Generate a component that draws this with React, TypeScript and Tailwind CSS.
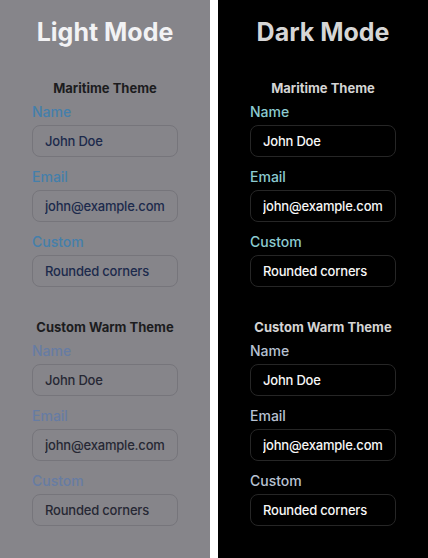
import React from "react";

type Palette = {
  panel: string;
  title: string;
  heading: string;
  border: string;
};

type Theme = {
  name: string;
  label: string;
  text: string;
};

interface Field {
  label: string;
  value: string;
}

const fields: Field[] = [
  { label: "Name", value: "John Doe" },
  { label: "Email", value: "john@example.com" },
  { label: "Custom", value: "Rounded corners" },
];

const light: Palette = {
  panel: "bg-[#86858a]",
  title: "text-[#f2f2f4]",
  heading: "text-[#1c1c1e]",
  border: "border-[#76757b]",
};

const dark: Palette = {
  panel: "bg-black",
  title: "text-[#d6d6d6]",
  heading: "text-[#d4d4d4]",
  border: "border-[#262626]",
};

const lightThemes: Theme[] = [
  { name: "Maritime Theme", label: "text-[#447fab]", text: "text-[#1c2a4c]" },
  { name: "Custom Warm Theme", label: "text-[#667ca3]", text: "text-[#262834]" },
];

const darkThemes: Theme[] = [
  { name: "Maritime Theme", label: "text-[#8ccbd0]", text: "text-[#f7f7f7]" },
  { name: "Custom Warm Theme", label: "text-[#b8c2d2]", text: "text-[#f7f7f7]" },
];

// One themed group of labelled inputs
const ThemeSection: React.FC<{ theme: Theme; palette: Palette; first: boolean }> = ({
  theme,
  palette,
  first,
}) => (
  <section className={first ? "mt-[30px]" : "mt-[30px]"}>
    <h3 className={`h-5 text-center text-[13px] leading-5 font-bold ${palette.heading}`}>
      {theme.name}
    </h3>
    <div className="mt-1 flex flex-col gap-[10px]">
      {fields.map((f) => (
        <label key={f.label} className="flex flex-col">
          <span className={`text-sm leading-5 font-medium ${theme.label}`}>{f.label}</span>
          <input
            readOnly
            defaultValue={f.value}
            className={`mt-[3px] h-8 w-full rounded-lg border bg-transparent px-3 text-[13px] font-medium tracking-[-0.2px] outline-none ${palette.border} ${theme.text}`}
          />
        </label>
      ))}
    </div>
  </section>
);

const Panel: React.FC<{ title: string; palette: Palette; themes: Theme[] }> = ({
  title,
  palette,
  themes,
}) => (
  <div className={`flex-1 px-8 pt-4 ${palette.panel}`}>
    <h2 className={`h-8 text-center text-[25px] leading-8 font-bold ${palette.title}`}>{title}</h2>
    {themes.map((t, i) => (
      <ThemeSection key={t.name} theme={t} palette={palette} first={i === 0} />
    ))}
  </div>
);

export default function App() {
  return (
    <div className="flex h-[558px] w-[428px] gap-2 bg-white font-['Inter',sans-serif]">
      <Panel title="Light Mode" palette={light} themes={lightThemes} />
      <Panel title="Dark Mode" palette={dark} themes={darkThemes} />
    </div>
  );
}
